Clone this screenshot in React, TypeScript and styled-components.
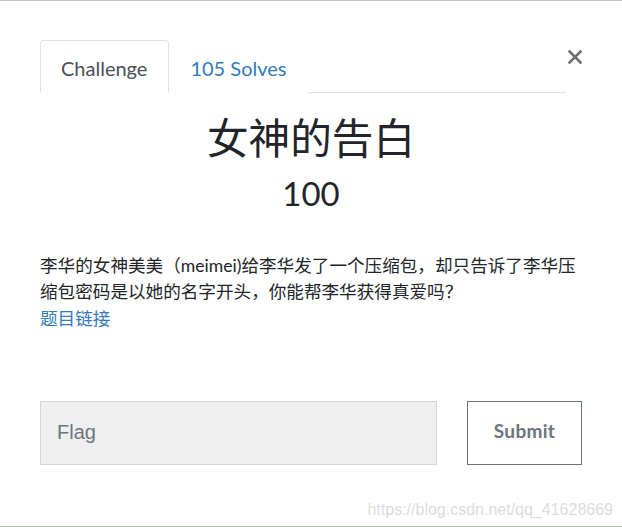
import React from "react";
import styled, { createGlobalStyle } from "styled-components";

const Global = createGlobalStyle`
  html, body { margin: 0; padding: 0; background: #fff; }
  body { font-family: Lato, "Noto Sans CJK SC", sans-serif; color: #212529; }
  * { box-sizing: border-box; }
`;

const Page = styled.div`
  width: 622px;
  height: 527px;
  border-top: 1px solid #c4c4c4;
  border-bottom: 1px solid #a9bfa9;
  display: flex;
  flex-direction: column;
  padding: 39px 40px 0 40px;
  position: relative;
  overflow: hidden;
`;

const Header = styled.div`
  display: flex;
  align-items: flex-start;
`;

const TabList = styled.div`
  flex: 1;
  display: flex;
  border-bottom: 1px solid #dee2e6;
  height: 53px;
`;

const Tab = styled.div<{ $active?: boolean }>`
  height: 53px;
  padding: 2px 21px 0 20px;
  display: flex;
  align-items: center;
  font-size: 20px;
  border: 1px solid ${(p) => (p.$active ? "#dee2e6" : "transparent")};
  border-bottom-color: ${(p) => (p.$active ? "#fff" : "transparent")};
  border-radius: 4px 4px 0 0;
  margin-bottom: -1px;
  background: #fff;
  color: ${(p) => (p.$active ? "#495057" : "#337ab7")};
`;

const Close = styled.div`
  width: 16px;
  display: flex;
  justify-content: flex-end;
  padding-top: 10px;
`;

const Title = styled.h1`
  margin: 20px 0 0;
  text-align: center;
  font-weight: 400;
  font-size: 41.6px;
  line-height: 50px;
  color: #212529;
`;

const Points = styled.h2`
  margin: 10px 0 0;
  text-align: center;
  font-weight: 400;
  font-size: 33px;
  line-height: 40px;
  color: #212529;
`;

const Description = styled.div`
  margin-top: 40px;
  font-size: 17.6px;
  line-height: 26.4px;
  color: #212529;

  p { margin: 0; }
  a { color: #337ab7; text-decoration: none; }
`;

const FormRow = styled.form`
  margin-top: 69px;
  display: flex;
  gap: 30px;
`;

const FlagInput = styled.input`
  width: 397px;
  height: 64px;
  background: #efefef;
  border: 1px solid #d2d7dc;
  padding: 0 16px 2px;
  font-size: 20px;
  font-family: "Liberation Sans", Arial, sans-serif;
  color: #495057;
  outline: none;
  &::placeholder { color: #6c757d; }
`;

const SubmitButton = styled.button`
  width: 115px;
  height: 64px;
  background: #fff;
  border: 1px solid #6c757d;
  color: #6c757d;
  font-family: Lato, sans-serif;
  font-weight: 700;
  font-size: 19px;
  letter-spacing: 0.3px;
  padding: 0 0 5px;
  cursor: pointer;
`;

const Watermark = styled.div`
  position: absolute;
  right: 9px;
  bottom: 7px;
  font-family: "Liberation Sans", Arial, sans-serif;
  font-size: 16px;
  color: #dcdcdc;
`;

export default function App() {
  return (
    <>
      <Global />
      <Page>
        <Header>
          <TabList>
            <Tab $active>Challenge</Tab>
            <Tab>105 Solves</Tab>
          </TabList>
          <Close>
            <svg width="14" height="14" viewBox="0 0 14 14">
              <path d="M1.5 1.5 L12.5 12.5 M12.5 1.5 L1.5 12.5" stroke="#6e6e6e" strokeWidth="2.6" strokeLinecap="square" />
            </svg>
          </Close>
        </Header>
        <Title>女神的告白</Title>
        <Points>100</Points>
        <Description>
          <p>
            李华的女神美美（meimei)给李华发了一个压缩包，却只告诉了李华压缩包密码是以她的名字开头，你能帮李华获得真爱吗？
          </p>
          <a href="#">题目链接</a>
        </Description>
        <FormRow onSubmit={(e) => e.preventDefault()}>
          <FlagInput placeholder="Flag" />
          <SubmitButton type="submit">Submit</SubmitButton>
        </FormRow>
        <Watermark>https://blog.csdn.net/qq_41628669</Watermark>
      </Page>
    </>
  );
}
